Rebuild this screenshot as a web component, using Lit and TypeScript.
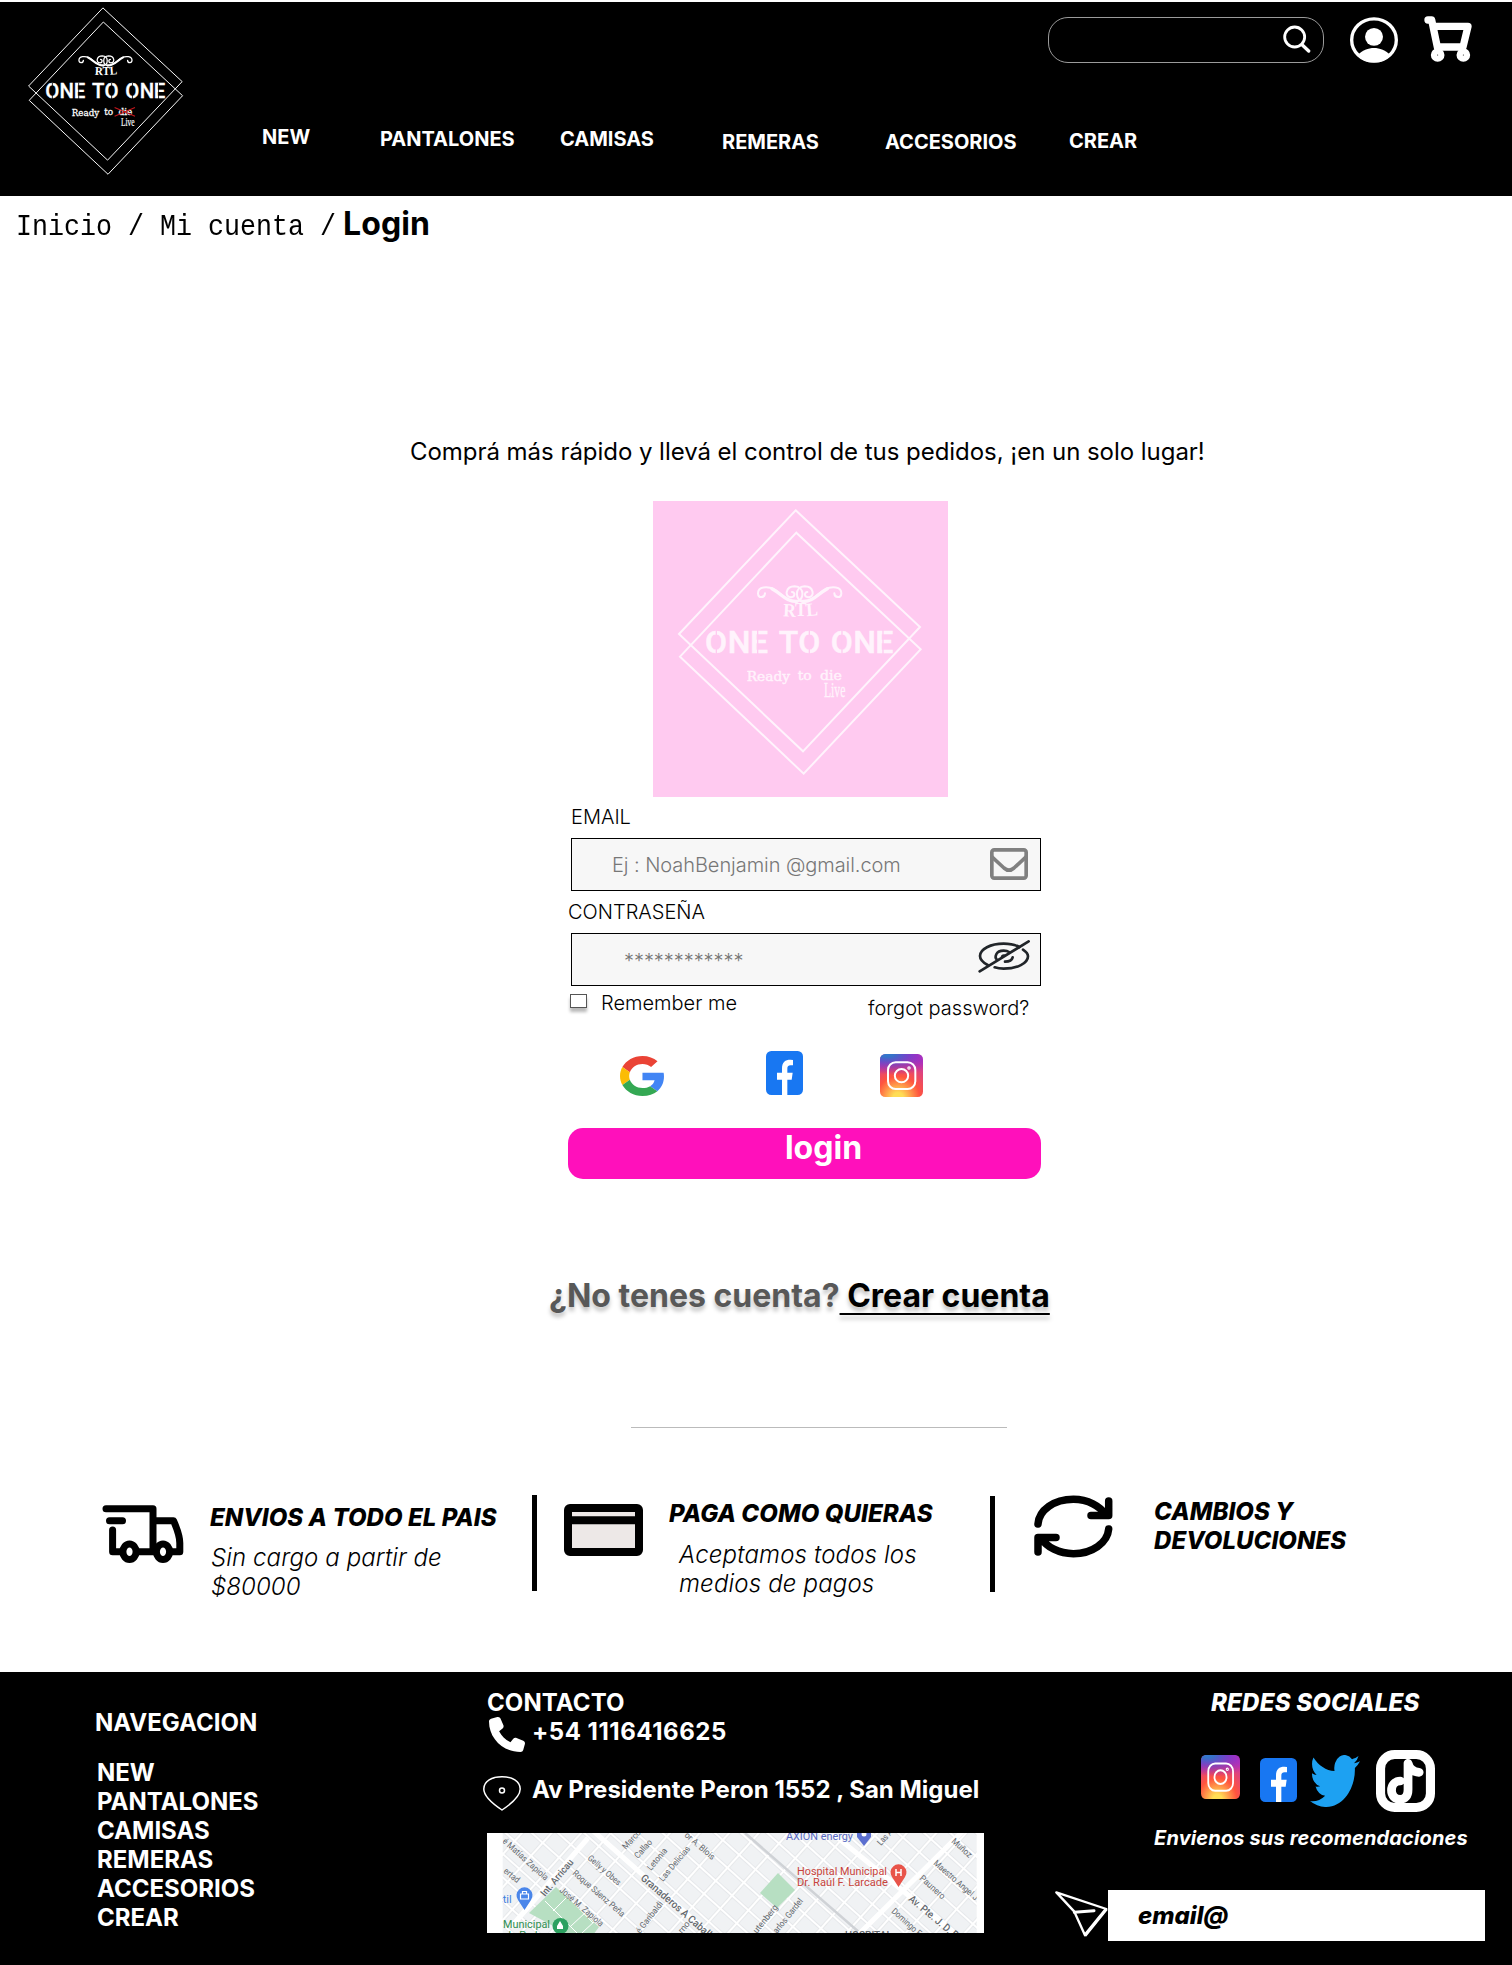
import { LitElement, html, css, svg } from "lit";
import { customElement, property } from "lit/decorators.js";

@customElement("brand-logo")
class BrandLogo extends LitElement {
  @property({ type: Boolean }) struck = false;
  static styles = css`
    :host { display: block; --ink: #fff; --paper: #000; --line: 4.6; }
    svg { display: block; width: 100%; height: 100%; }
    .frame { fill: none; stroke: var(--ink); stroke-width: var(--line); }
    .curl { fill: none; stroke: var(--ink); stroke-width: 6; stroke-linecap: round; }
    .sweep { fill: none; stroke: var(--ink); stroke-width: 10; stroke-linecap: round; }
    .cut { stroke: var(--paper); stroke-width: 4; }
    .name { font: 500 96px Roboto, "Open Sans", sans-serif; fill: var(--ink); stroke: var(--ink); stroke-width: 1.5; }
    .rtl { font: bold 56px "Liberation Serif", serif; fill: var(--ink); }
    .tag { font: 41px "DejaVu Serif", serif; fill: var(--ink); stroke: var(--ink); stroke-width: 1.2; }
    .live { font: 60px "Liberation Serif", serif; fill: var(--ink); stroke: var(--ink); stroke-width: 1; }
    .strike { stroke: #c4161c; stroke-width: 5; }
  `;
  render() {
    const curl =
      "M345 286C344 300 325 302 324 286C324 266 352 264 372 274C400 290 410 312 440 311C462 308 466 266 434 265C406 265 402 298 424 298C436 297 436 282 426 282";
    const sweep = "M366 272C396 288 408 312 440 310";
    return html`<svg viewBox="9 9 885 888" preserveAspectRatio="none">
      <path class="frame" d="M437 37L810 387L459 760L87 408Z" />
      <path class="frame" d="M439 104L812 454L461 827L90 476Z" />
      <path class="curl" d=${curl} /><path class="sweep" d=${sweep} />
      <g transform="translate(898 0) scale(-1 1)"><path class="curl" d=${curl} /><path class="sweep" d=${sweep} /></g>
      <text class="rtl" x="399" y="355" rotate="3 0 -5" textLength="106" lengthAdjust="spacingAndGlyphs">RTL</text>
      <text class="name" x="165 233 300 320 386 445 520 542 610 676" y="465">ONE TO ONE</text>
      ${[199, 323, 478, 576, 699].map((x) => svg`<path class="cut" d="M${x} 392V470" />`)}
      <text class="tag" x="290" y="548" textLength="130" lengthAdjust="spacingAndGlyphs">Ready</text>
      <text class="tag" x="443" y="545" textLength="42" lengthAdjust="spacingAndGlyphs">to</text>
      <text class="tag" x="510" y="547" textLength="66" lengthAdjust="spacingAndGlyphs">die</text>
      <text class="live" x="522" y="598" textLength="64" lengthAdjust="spacingAndGlyphs">Live</text>
      ${this.struck ? svg`<path class="strike" d="M492 510L588 552M588 510L492 552" />` : ""}
    </svg>`;
  }
}

@customElement("social-icon")
class SocialIcon extends LitElement {
  @property() kind = "facebook";
  static styles = css`
    :host { display: block; }
    svg { display: block; width: 100%; height: 100%; }
  `;
  render() {
    switch (this.kind) {
      case "google":
        return html`<svg viewBox="0 0 47 48" preserveAspectRatio="none">
          <path fill="#EA4335" d="M24 9.5c3.54 0 6.71 1.22 9.21 3.6l6.85-6.85C35.9 2.38 30.47 0 24 0 14.62 0 6.51 5.38 2.56 13.22l7.98 6.19C12.43 13.72 17.74 9.5 24 9.5z" />
          <path fill="#4285F4" d="M46.98 24.55c0-1.57-.15-3.09-.38-4.55H24v9.02h12.94c-.58 2.96-2.26 5.48-4.78 7.18l7.73 6c4.51-4.18 7.09-10.36 7.09-17.65z" />
          <path fill="#FBBC05" d="M10.53 28.59c-.48-1.45-.76-2.99-.76-4.59s.27-3.14.76-4.59l-7.98-6.19C.92 16.46 0 20.12 0 24c0 3.88.92 7.54 2.56 10.78l7.97-6.19z" />
          <path fill="#34A853" d="M24 48c6.48 0 11.93-2.13 15.89-5.81l-7.73-6c-2.15 1.45-4.92 2.3-8.16 2.3-6.26 0-11.57-4.22-13.47-9.91l-7.98 6.19C6.51 42.62 14.62 48 24 48z" />
        </svg>`;
      case "instagram":
        return html`<svg viewBox="0 0 129 129" preserveAspectRatio="none">
          <defs>
            <radialGradient id="warm" cx=".42" cy="1.02" r="1">
              <stop offset="0" stop-color="#fd5" /><stop offset=".12" stop-color="#fd5" />
              <stop offset=".5" stop-color="#ff543e" /><stop offset="1" stop-color="#c837ab" />
            </radialGradient>
            <radialGradient id="cool" cx="0" cy="0" r="1" gradientTransform="translate(.1 -.03) rotate(8) scale(1.15 .5)">
              <stop offset="0" stop-color="#2f7fd0" /><stop offset=".2" stop-color="#3771c8" />
              <stop offset="1" stop-color="#60f" stop-opacity="0" />
            </radialGradient>
          </defs>
          <rect width="129" height="129" rx="16" fill="url(#warm)" />
          <rect width="129" height="129" rx="16" fill="url(#cool)" />
          <g fill="none" stroke="#fff" stroke-width="6">
            <rect x="24" y="25" width="82" height="80" rx="23" />
            <circle cx="64.500" cy="65" r="20" />
            <circle cx="87" cy="42" r="3.500" stroke-width="3.500" />
          </g>
        </svg>`;
      case "twitter":
        return html`<svg viewBox="0 2.25 24 19.5" preserveAspectRatio="none">
          <path fill="#1da1f2" d="M23.953 4.57a10 10 0 01-2.825.775 4.958 4.958 0 002.163-2.723c-.951.555-2.005.959-3.127 1.184a4.92 4.92 0 00-8.384 4.482C7.69 8.095 4.067 6.13 1.64 3.162a4.822 4.822 0 00-.666 2.475c0 1.71.87 3.213 2.188 4.096a4.904 4.904 0 01-2.228-.616v.06a4.923 4.923 0 003.946 4.827 4.996 4.996 0 01-2.212.085 4.936 4.936 0 004.604 3.417 9.867 9.867 0 01-6.102 2.105c-.39 0-.779-.023-1.17-.067a13.995 13.995 0 007.557 2.209c9.053 0 13.998-7.496 13.998-13.985 0-.21 0-.42-.015-.63A9.935 9.935 0 0024 4.59z" />
        </svg>`;
      case "tiktok":
        return html`<svg viewBox="0 0 175 186" preserveAspectRatio="none" fill="none" stroke="#fff">
          <rect x="13.500" y="13.500" width="148" height="159" rx="42" stroke-width="27" />
          <path d="M95 40V119C95 138 86 148 72 148C56 148 46 136 46 121C46 105 57 93 72 93M95 40C99 57 110 66 128 67" stroke-width="26" stroke-linecap="round" />
        </svg>`;
      default:
        return html`<svg viewBox="0 0 111 132" preserveAspectRatio="none">
          <rect width="111" height="132" rx="16" fill="#1877f2" />
          <path fill="#fff" d="M48 132V86H33V65H48V53C48 33 58 26 73 26Q78 26 81 27V43H74C66 43 64 47 64 54V65H80L77 86H64V132Z" />
        </svg>`;
    }
  }
}

interface Label { t: string; x: number; y: number; r: number; len: number; s?: number; w?: number }
const STREETS: Label[] = [
  { t: "Int. Arricau", x: 58, y: 64, r: -50, len: 45, s: 10, w: 500 },
  { t: "é Matías Zapiola", x: 15, y: 9, r: 42, len: 58 },
  { t: "ertad", x: 16, y: 39, r: 39, len: 18 },
  { t: "José M. Zapiola", x: 72, y: 58, r: 41, len: 55 },
  { t: "Roque Sáenz Peña", x: 85, y: 41, r: 41, len: 66 },
  { t: "Gelly y Obes", x: 100, y: 26, r: 41, len: 41 },
  { t: "Granaderos A Caball", x: 153, y: 46, r: 41, len: 90, s: 10.5, w: 500 },
  { t: "Marcos", x: 139, y: 17, r: -48, len: 27 },
  { t: "Callao", x: 151, y: 26, r: -48, len: 22 },
  { t: "Letonia", x: 164, y: 38, r: -50, len: 26 },
  { t: "Las Delicias", x: 176, y: 49, r: -50, len: 43 },
  { t: "or A. Blois", x: 197, y: 3, r: 41, len: 37 },
  { t: "Las A", x: 394, y: 13, r: -48, len: 18 },
  { t: "Muñoz", x: 464, y: 9, r: 42, len: 24 },
  { t: "Maestro Angel J", x: 446, y: 31, r: 41, len: 56 },
  { t: "Paunero", x: 432, y: 46, r: 42, len: 31 },
  { t: "Av. Pte. J. D. Pe", x: 421, y: 67, r: 40, len: 66, s: 10.5, w: 500 },
  { t: "Domingo F.", x: 404, y: 79, r: 42, len: 38 },
  { t: "utenberg", x: 270, y: 101, r: -51, len: 34 },
  { t: "arlos Gardel", x: 290, y: 101, r: -51, len: 42 },
  { t: "é Garibaldi", x: 153, y: 101, r: -52, len: 38 },
  { t: "rno", x: 195, y: 101, r: -50, len: 13 },
];

@customElement("street-map")
class StreetMap extends LitElement {
  static styles = css`
    :host { display: block; background: #fff; font-weight: 400; }
    svg { display: block; width: 497px; height: 100px; }
    text { font-family: Roboto, sans-serif; }
    .street { fill: #63686d; }
    .road { fill: none; stroke: #fff; }
    .park { fill: #b7dfc2; }
    .poi { font-size: 11px; }
    .blue { fill: #5a6bc4; }
    .sky { fill: #3f7fe0; }
    .red { fill: #c8443c; }
    .green { fill: #2f8f50; }
  `;
  render() {
    return html`<svg viewBox="0 0 497 100">
      <defs>
        <pattern id="blocks" width="22" height="17.500" patternUnits="userSpaceOnUse" patternTransform="rotate(42) translate(4 5)">
          <rect width="22" height="17.500" fill="#fff" />
          <rect x="1" y="1" width="20" height="15.500" fill="#e3e5e8" />
          <rect x="1.700" y="1.700" width="18.600" height="14.100" fill="#f0f2f4" />
        </pattern>
        <clipPath id="tile"><rect x="15.700" width="474" height="100" /></clipPath>
      </defs>
      <g clip-path="url(#tile)">
        <rect width="497" height="100" fill="url(#blocks)" />
        <path class="park" d="M69 54L112 94L106 102H83L42 80Z" />
        <path class="park" d="M291 40L308 57L290 75L273 60Z" />
        <path class="road" stroke-width="1" d="M58 68L92 102M66 78L84 60M84 93L100 78M95 100L110 86M80 63L106 90" />
        <path stroke="#cfd2d6" stroke-width="2.500" fill="none" d="M258 0L373 100" />
        <path class="road" stroke-width="5" d="M104 -4L226 104M101 5L24 94M340 -4L421 62L470 104M478 -4L369 104" />
        ${STREETS.map(
          (l) => svg`<text class="street" font-size=${l.s ?? 8.8} font-weight=${l.w ?? 400}
            textLength=${l.len} lengthAdjust="spacingAndGlyphs" transform="translate(${l.x} ${l.y}) rotate(${l.r})">${l.t}</text>`
        )}
        <text class="street" x="358" y="106" font-size="10" font-weight="500">HOSPITAL</text>
        <text class="poi blue" x="299" y="6.500" textLength="67" lengthAdjust="spacingAndGlyphs">AXION energy</text>
        <path d="M377 13L370 4V-4H384V4Z" fill="#5b6fd0" /><circle cx="377" cy="1" r="2.500" fill="#fff" />
        <text class="poi red" x="310" y="42" textLength="90" lengthAdjust="spacingAndGlyphs">Hospital Municipal</text>
        <text class="poi red" x="310" y="53" textLength="91" lengthAdjust="spacingAndGlyphs">Dr. Raúl F. Larcade</text>
        <path d="M411.500 54L405 44A8 8 0 1 1 418 44Z" fill="#e8544a" />
        <path d="M409 36V43M414 36V43M409 39.500H414" stroke="#fff" stroke-width="1.500" />
        <text class="poi sky" x="10" y="70">ctil</text>
        <path d="M37.500 77L31 67A8 8 0 1 1 44 67Z" fill="#4a86ea" />
        <path d="M33.500 61H41.500V66H33.500ZM35.500 61V58.500H39.500V61" fill="none" stroke="#fff" stroke-width="1.200" />
        <text class="poi green" x="16" y="95" textLength="47" lengthAdjust="spacingAndGlyphs">Municipal</text>
        <text class="poi green" x="18" y="106" textLength="44" lengthAdjust="spacingAndGlyphs">de Padua</text>
        <circle cx="73.500" cy="93" r="8" fill="#2da160" />
        <path d="M73 88L76 93V96H70V93Z" fill="#fff" />
      </g>
    </svg>`;
  }
}

@customElement("app-root")
class AppRoot extends LitElement {
  static styles = css`
    :host {
      display: block; width: 1512px; height: 1965px; overflow: hidden; background: #fff; color: #000;
      font-family: Inter, "Open Sans", sans-serif; font-size: 24px; line-height: 29px; white-space: nowrap;
    }
    * { box-sizing: border-box; }
    svg { display: block; flex: none; }
    a { color: inherit; text-decoration: none; }

    .header { display: flex; height: 194px; margin-top: 2px; background: #000; color: #fff; overflow: hidden; }
    .header-logo { width: 188px; height: 187px; margin-left: 12px; flex: none; }
    .header-main { flex: 1; display: flex; flex-direction: column; }
    .tools { display: flex; justify-content: flex-end; height: 80px; padding: 14px 40px 0 0; }
    .search {
      width: 276px; height: 46px; border: 1px solid #9b9b9b; border-radius: 20px; display: flex;
      justify-content: flex-end; padding: 7px 12px 0 0; margin: 1px 26px 0 0;
    }
    .user { margin: 1px 26px 0 0; }
    .menu { display: flex; align-items: flex-start; padding: 43px 0 0 62px; font-size: 20px; line-height: 24px; font-weight: 700; }
    .menu a { flex: none; }
    .m1 { width: 118px; } .m2 { width: 180px; margin-top: 2px; } .m3 { width: 162px; margin-top: 2px; }
    .m4 { width: 163px; margin-top: 5px; } .m5 { width: 184px; margin-top: 5px; } .m6 { margin-top: 4px; }

    .crumbs { display: flex; align-items: baseline; height: 39px; margin-top: 8px; padding-left: 16px; }
    .trail { font: 26.67px/39px "Liberation Mono", monospace; width: 327px; white-space: pre; transform: scaleY(1.12); transform-origin: 0 22px; }
    .here { font-size: 32px; line-height: 39px; font-weight: 700; letter-spacing: .1px; }

    .lead { margin: 194px 0 0 410px; font-weight: 380; letter-spacing: -.04px; }
    .card-logo { width: 295px; height: 296px; margin: 35px 0 0 653px; background: #ffcaf0; --paper: #ffcaf0; --ink: #fff3fc; --line: 6; }

    .form { width: 473px; margin-left: 568px; font-size: 20px; line-height: 24px; font-weight: 300; }
    .form label { display: block; }
    .l1 { margin: 8px 0 9px 3px; }
    .l2 { margin: 9px 0 9px 0; }
    .field { display: flex; width: 470px; height: 53px; margin-left: 3px; background: #f7f7f7; border: 1px solid #000; }
    .field input {
      flex: 1; min-width: 0; border: 0; padding: 0 0 0 40px; background: none; outline: 0;
      font: 300 20px/24px Inter, sans-serif; color: #777; letter-spacing: -.06px;
    }
    .field input::placeholder { color: #777; opacity: 1; }
    .field .secret { padding: 3px 0 0 52px; }
    .mail { margin: 9px 12px 0 0; } .eye { margin: 5px 10px 0 0; }
    .options { display: flex; align-items: flex-start; height: 65px; }
    .box { width: 17px; height: 14px; margin: 8px 14px 0 2px; border: 1.500px solid #555; background: #fff; box-shadow: 0 4px 3px rgba(0,0,0,.28); }
    .remember { margin-top: 5px; width: 267px; }
    .forgot { margin-top: 10px; }
    .signin { display: flex; align-items: flex-start; height: 77px; padding-left: 52px; }
    .g { width: 44px; height: 40px; margin: 5px 102px 0 0; }
    .f { width: 37px; height: 44px; margin-right: 77px; }
    .i { width: 43px; height: 43px; margin-top: 3px; }
    .login {
      display: block; width: 473px; height: 51px; border: 0; border-radius: 15px; background: #ff10bb; color: #fff;
      font: 700 32px/39px Inter, sans-serif; padding: 0 0 12px 38px; text-align: center;
    }
    .signup { margin: 97px 0 0 549px; font-size: 32px; line-height: 39px; font-weight: 700; color: #585858; display: flex; text-shadow: 0 4px 4px rgba(0,0,0,.25); }
    .create { color: #000; white-space: pre; text-decoration: underline; text-decoration-thickness: 2px; text-underline-offset: 6px; }
    .rule { width: 376px; height: 1px; background: #bbb; margin: 112px 0 0 631px; }

    .perks { display: flex; height: 244px; padding: 67px 0 0 102px; align-items: flex-start; }
    .perk { display: flex; align-items: flex-start; }
    .perk h3 { margin: 0; font-size: 24px; line-height: 29px; font-weight: 800; font-style: italic; letter-spacing: .06px; }
    .perk p { margin: 0; font-weight: 330; font-style: italic; letter-spacing: .1px; }
    .bar { width: 5px; height: 96px; background: #000; }
    .bar.low { margin-top: 1px; }
    .truck { margin-top: 10px; } .card { margin-top: 9px; }
    .p1 { width: 430px; } .p2 { width: 453px; padding-left: 27px; } .p3 { padding-left: 39px; }
    .p1 .txt { margin: 8px 0 0 26px; } .p1 p { margin: 11px 0 0 1px; }
    .p2 .txt { margin: 4px 0 0 26px; } .p2 p { margin: 12px 0 0 10px; letter-spacing: .17px; }
    .p2 h3 { letter-spacing: .1px; }
    .p3 .txt { margin: 2px 0 0 41px; }

    .footer { display: flex; height: 293px; background: #000; color: #fff; font-weight: 700; }
    .nav { width: 483px; padding: 36px 0 0 95px; display: flex; flex-direction: column; }
    .nav h4, .contact h4, .social h4 { margin: 0; font-size: 24px; line-height: 29px; font-weight: 700; }
    .nav h4 { margin-bottom: 21px; }
    .nav a { margin-left: 2px; }
    .contact { width: 572px; padding-top: 16px; }
    .contact h4 { margin-left: 4px; letter-spacing: .1px; }
    .phone { display: flex; align-items: flex-start; height: 58px; letter-spacing: .52px; }
    .phone svg { margin: 0 7px 0 6px; }
    .addr { display: flex; align-items: flex-start; height: 58px; }
    .addr svg { margin: 1px 11px 0 0; }
    .map { width: 497px; height: 100px; margin-left: 4px; }
    .social { width: 457px; padding-top: 16px; }
    .social h4 { margin-left: 156px; font-style: italic; font-weight: 800; letter-spacing: .2px; }
    .row { display: flex; align-items: flex-start; margin: 33px 0 0 146px; height: 76px; }
    .ri { width: 39px; height: 44px; margin: 5px 20px 0 0; }
    .rf { width: 37px; height: 44px; margin: 8px 13px 0 0; }
    .rt { width: 50px; height: 52px; margin: 5px 16px 0 0; }
    .rk { width: 59px; height: 62px; }
    .ask { margin: 0 0 0 99px; font-size: 20px; line-height: 24px; font-style: italic; font-weight: 750; letter-spacing: .14px; }
    .mailer { display: flex; margin-top: 40px; align-items: flex-start; }
    .mailer input {
      width: 377px; height: 51px; border: 0; padding: 0 0 0 30px; background: #fff;
      font: italic 800 24px/29px Inter, sans-serif; color: #000;
    }
    .mailer input::placeholder { color: #000; opacity: 1; }
  `;

  render() {
    return html`
      <header class="header">
        <brand-logo class="header-logo" struck></brand-logo>
        <div class="header-main">
          <div class="tools">
            <div class="search">
              <svg width="28" height="28" viewBox="788 73 84 84" fill="none" stroke="#fff" stroke-linecap="round">
                <circle cx="823" cy="109" r="30" stroke-width="8.500" /><path d="M846 133L865 151" stroke-width="10" />
              </svg>
            </div>
            <svg class="user" width="48" height="46" viewBox="990 50 144 139" preserveAspectRatio="none">
              <ellipse cx="1062" cy="119.500" rx="67" ry="64" fill="none" stroke="#fff" stroke-width="10" />
              <circle cx="1062" cy="110" r="27" fill="#fff" />
              <path d="M1013 166C1026 151 1045 144 1062 144S1098 151 1111 166C1097 182 1080 187 1062 187S1027 182 1013 166Z" fill="#fff" />
            </svg>
            <svg width="48" height="46" viewBox="1212 48 144 138" preserveAspectRatio="none" fill="none" stroke="#fff" stroke-linecap="round" stroke-linejoin="round">
              <path d="M1224 60H1235L1252 141M1240 79H1344L1329 141H1252" stroke-width="22" />
              <circle cx="1253" cy="165" r="11" stroke-width="19" /><circle cx="1330" cy="165" r="11" stroke-width="19" />
            </svg>
          </div>
          <nav class="menu">
            <a class="m1">NEW</a><a class="m2">PANTALONES</a><a class="m3">CAMISAS</a>
            <a class="m4">REMERAS</a><a class="m5">ACCESORIOS</a><a class="m6">CREAR</a>
          </nav>
        </div>
      </header>

      <div class="crumbs"><span class="trail">Inicio / Mi cuenta /</span><span class="here">Login</span></div>
      <div class="lead">Comprá más rápido y llevá el control de tus pedidos, ¡en un solo lugar!</div>
      <brand-logo class="card-logo"></brand-logo>

      <div class="form">
        <label class="l1">EMAIL</label>
        <div class="field">
          <input placeholder="Ej : NoahBenjamin @gmail.com" />
          <svg class="mail" width="38" height="32" viewBox="1350 174 114 96" fill="none" stroke="#808080" stroke-width="11">
            <rect x="1355.500" y="179.500" width="103" height="85" rx="7" />
            <path d="M1355 200L1392 234Q1407 247 1422 234L1459 200" />
          </svg>
        </div>
        <label class="l2">CONTRASEÑA</label>
        <div class="field">
          <input class="secret" placeholder="************" />
          <svg class="eye" width="52" height="34" viewBox="1314 446 156 102" fill="none" stroke="#212529" stroke-width="8" stroke-linecap="round">
            <path d="M1319 543L1466 453" />
            <path d="M1343 524C1328 516 1320 507 1320 497C1320 476 1352 460 1391 460C1408 460 1425 463 1438 470" />
            <path d="M1449 478C1458 484 1464 490 1464 498C1464 519 1431 535 1391 535C1381 535 1373 534 1364 531" />
            <path d="M1370 507C1364 501 1366 481 1391 481C1398 481 1403 482 1407 485M1395 514C1406 514 1416 509 1418 501" />
            <path d="M1386 500C1387 496 1391 495 1394 496" />
          </svg>
        </div>
        <div class="options">
          <span class="box"></span><span class="remember">Remember me</span><a class="forgot">forgot password?</a>
        </div>
        <div class="signin">
          <social-icon class="g" kind="google"></social-icon>
          <social-icon class="f" kind="facebook"></social-icon>
          <social-icon class="i" kind="instagram"></social-icon>
        </div>
        <button class="login">login</button>
      </div>

      <div class="signup"><span>¿No tenes cuenta?</span><a class="create"> Crear cuenta</a></div>
      <div class="rule"></div>

      <section class="perks">
        <div class="perk p1">
          <svg class="truck" width="82" height="58" viewBox="0 0 82 58" fill="none" stroke="#000" stroke-width="7" stroke-linecap="round" stroke-linejoin="round">
            <path d="M4 3.800H51V46M7.500 15.700H20.500M10.600 25V46.700H20M36 46.700H53M51 15.700H71.500Q77.800 30 77.800 38V46.700H70" />
            <ellipse cx="27.500" cy="46.700" rx="6.600" ry="7.800" /><ellipse cx="61" cy="46.700" rx="6.600" ry="7.800" />
          </svg>
          <div class="txt"><h3>ENVIOS A TODO EL PAIS</h3><p>Sin cargo a partir de<br />$80000</p></div>
        </div>
        <div class="bar"></div>
        <div class="perk p2">
          <svg class="card" width="79" height="52" viewBox="0 0 79 52">
            <rect x="4" y="4" width="71" height="44" rx="2" fill="#ede8e7" stroke="#000" stroke-width="8" stroke-linejoin="round" />
            <path d="M4 16.200H75" stroke="#000" stroke-width="8" />
          </svg>
          <div class="txt"><h3>PAGA COMO QUIERAS</h3><p>Aceptamos todos los<br />medios de pagos</p></div>
        </div>
        <div class="bar low"></div>
        <div class="perk p3">
          <svg width="79" height="63" viewBox="0 0 79 63" fill="none" stroke="#000" stroke-width="7.500" stroke-linecap="round" stroke-linejoin="round">
            <path d="M4 29C5 15 20 4.300 39.400 4.300C54 4.300 66 11 72 20M74.700 6V20.500H57" />
            <path d="M74.700 34C73.500 48 58 58.700 39.400 58.700C25 58.700 12.500 52 7 43M4 57V42.500H22" />
          </svg>
          <div class="txt"><h3>CAMBIOS Y<br />DEVOLUCIONES</h3></div>
        </div>
      </section>

      <footer class="footer">
        <nav class="nav">
          <h4>NAVEGACION</h4>
          <a>NEW</a><a>PANTALONES</a><a>CAMISAS</a><a>REMERAS</a><a>ACCESORIOS</a><a>CREAR</a>
        </nav>
        <div class="contact">
          <h4>CONTACTO</h4>
          <div class="phone">
            <svg width="36" height="35" viewBox="0 0 512 512" preserveAspectRatio="none"><path fill="#fff" d="M164.900 24.600c-7.700-18.600-28-28.500-47.400-23.200l-88 24C12.100 30.200 0 46 0 64C0 311.400 200.600 512 448 512c18 0 33.800-12.100 38.600-29.500l24-88c5.300-19.400-4.600-39.700-23.200-47.400l-96-40c-16.300-6.800-35.200-2.100-46.300 11.600L304.700 368C234.300 334.700 177.300 277.700 144 207.300L193.300 167c13.700-11.200 18.400-30 11.600-46.300l-40-96z" /></svg>
            <span>+54 1116416625</span>
          </div>
          <div class="addr">
            <svg width="38" height="35" viewBox="0 0 38 35" fill="none" stroke="#fff" stroke-width="1.500">
              <path d="M19 34C10 28 .8 20.500 .8 13C.8 5 9 .8 19 .8S37.200 5 37.200 13C37.200 20.500 28 28 19 34Z" />
              <circle cx="19" cy="14.500" r="2.500" />
            </svg>
            <span>Av Presidente Peron 1552 , San Miguel</span>
          </div>
          <street-map class="map"></street-map>
        </div>
        <div class="social">
          <h4>REDES SOCIALES</h4>
          <div class="row">
            <social-icon class="ri" kind="instagram"></social-icon>
            <social-icon class="rf" kind="facebook"></social-icon>
            <social-icon class="rt" kind="twitter"></social-icon>
            <social-icon class="rk" kind="tiktok"></social-icon>
          </div>
          <div class="ask">Envienos sus recomendaciones</div>
          <div class="mailer">
            <svg width="53" height="48" viewBox="75 690 159 144" fill="none" stroke="#fff" stroke-linejoin="round">
              <path d="M79 697L229 747L165 826L133 755Z" stroke-width="7" />
              <path d="M229 747L165 826" stroke-width="10" />
              <path d="M133 757L192 752" stroke-width="9" stroke-linecap="round" />
            </svg>
            <input placeholder="email@" />
          </div>
        </div>
      </footer>
    `;
  }
}
